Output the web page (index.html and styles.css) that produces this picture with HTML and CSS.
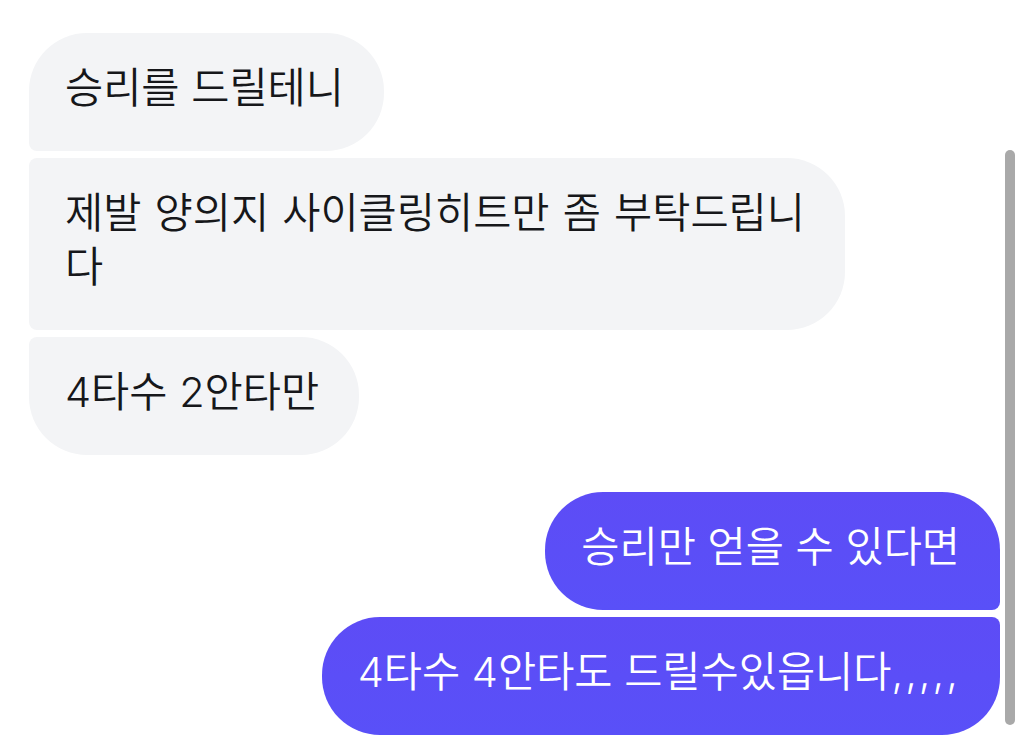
FILE: index.html
```html
<!DOCTYPE html>
<html lang="ko">
<head>
<meta charset="utf-8">
<link rel="stylesheet" href="styles.css">
</head>
<body>
<div class="chat">
  <div class="group group-in">
    <div class="bubble in first">승리를 드릴테니</div>
    <div class="bubble in middle wide">제발 양의지 사이클링히트만 좀 부탁드립니<br>다</div>
    <div class="bubble in last">4타수 2안타만</div>
  </div>
  <div class="group group-out">
    <div class="bubble out first">승리만 얻을 수 있다면</div>
    <div class="bubble out last">4타수 4안타도 드릴수있읍니다<span class="commas">,,,,,</span></div>
  </div>
</div>
<div class="scrollbar"></div>
</body>
</html>
```

FILE: styles.css
```css
html, body {
  margin: 0;
  padding: 0;
  background: #ffffff;
  overflow: hidden;
}

body {
  font-family: "Inter", "Noto Sans CJK KR", "Noto Sans", sans-serif;
  width: 1024px;
  height: 748px;
  position: relative;
}

.chat {
  display: flex;
  flex-direction: column;
  gap: 37px;
  padding: 33px 24px 0 29px;
}

.group {
  display: flex;
  flex-direction: column;
  gap: 7px;
}

.group-in { align-items: flex-start; }
.group-out { align-items: flex-end; }

.bubble {
  font-size: 41.5px;
  font-weight: 350;
  line-height: 54px;
  padding: 28px 40px 36px 36px;
  max-width: 840px;
  box-sizing: border-box;
  white-space: nowrap;
}

.wide { word-spacing: 1.5px; }

.commas { letter-spacing: 2px; }

.in {
  background: #f3f4f6;
  color: #16171a;
  border-radius: 58px;
}

.in.first { border-radius: 58px 58px 58px 8px; }
.in.middle { border-radius: 8px 58px 58px 8px; }
.in.last { border-radius: 8px 58px 58px 58px; }

.out {
  background: linear-gradient(#5d4cf6, #5950f8);
  color: #ffffff;
  border-radius: 58px;
}

.out.first { border-radius: 58px 58px 8px 58px; }
.out.last { border-radius: 58px 8px 58px 58px; }

.scrollbar {
  position: absolute;
  left: 1005px;
  top: 150px;
  width: 10px;
  height: 575px;
  border-radius: 5px;
  background: #a9a9a9;
}
```
